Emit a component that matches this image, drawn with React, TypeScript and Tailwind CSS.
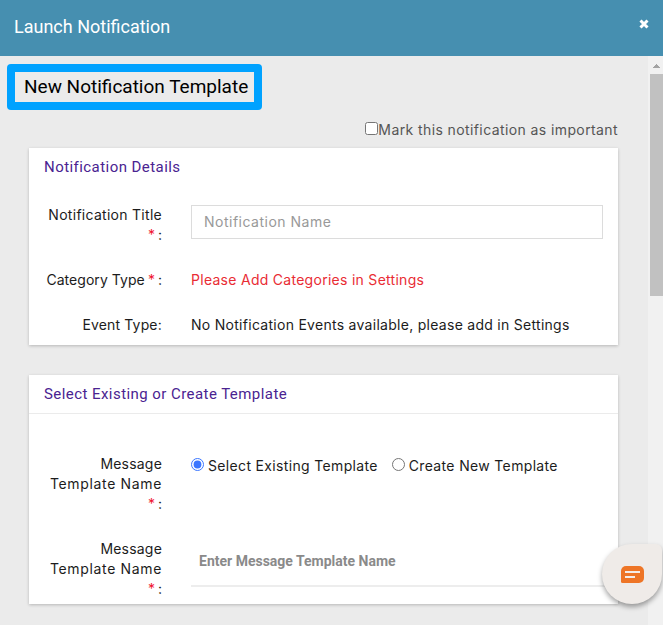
import type { ReactNode } from "react";

interface FieldLabelProps {
  children: ReactNode;
  required?: boolean;
}

function FieldLabel({ children, required = false }: FieldLabelProps) {
  return (
    <label className="w-[118px] shrink-0 text-right">
      {children}
      {required ? (
        <>
          {" "}
          {/* keeps the asterisk and the colon on one line */}
          <span className="-ml-px whitespace-nowrap tracking-normal">
            <span className="mr-[-1px] text-[#f0142f]">*</span> :
          </span>
        </>
      ) : (
        ":"
      )}
    </label>
  );
}

interface PanelProps {
  title: string;
  divided?: boolean;
  children: ReactNode;
}

function Panel({ title, divided = false, children }: PanelProps) {
  return (
    <section className="bg-white shadow-[0_1px_3px_rgba(0,0,0,0.22)]">
      <h2
        className={`h-[39px] border-b px-[15px] font-[Roboto] text-[15px] leading-[38px] font-normal tracking-[0.44px] text-[#4a2391] ${
          divided ? "border-[#ebebeb]" : "border-transparent"
        }`}
      >
        {title}
      </h2>
      {children}
    </section>
  );
}

function TemplateNameLabel() {
  return (
    <FieldLabel required>
      <span className="tracking-[0.2px]">Message</span>{" "}
      <span className="tracking-[0.65px]">Template Name</span>
    </FieldLabel>
  );
}

function Scrollbar() {
  return (
    <div className="flex w-[15px] shrink-0 flex-col bg-[#f1f1f1] pl-[2px]">
      <svg width="13" height="17" viewBox="0 0 13 17" className="mt-px" shapeRendering="crispEdges">
        <path d="M3 11h7v-1H9V9H8V8H7V7H6v1H5v1H4v1H3z" fill="#a3a3a3" />
      </svg>
      <div className="h-[222px] bg-[#c1c1c1]" />
    </div>
  );
}

function ChatButton() {
  return (
    <button
      aria-label="Open chat"
      className="absolute top-[544px] left-[602px] flex h-[60px] w-[60px] items-center justify-center rounded-[30px] rounded-tr-[6px] bg-[#efebe8] shadow-[0_3px_5px_rgba(0,0,0,0.35)]"
    >
      <svg width="23" height="17" viewBox="0 0 23 17">
        <path d="M5 0h13a5 5 0 0 1 5 5v7a5 5 0 0 1-5 5H1.5A1.5 1.5 0 0 1 0 15.500V5a5 5 0 0 1 5-5z" fill="#ee7526" />
        <path d="M4 6h15M4 11h10" stroke="#f4ede8" strokeWidth="2" />
      </svg>
    </button>
  );
}

export default function App() {
  return (
    <div className="relative flex h-[625px] w-[663px] flex-col overflow-hidden bg-[#ebebeb] font-[Inter,sans-serif] text-[14px] leading-5 tracking-[0.28px] text-[#1c1c1c]">
      <header className="flex h-14 shrink-0 items-center justify-between bg-[#468fb0] pr-[14px] pl-[14px] text-white">
        <h1 className="-mt-[3px] font-[Roboto] text-[18px] tracking-normal">Launch Notification</h1>
        <button aria-label="Close" className="-mt-2">
          <svg width="10" height="10" viewBox="0 0 10 10">
            <path d="M1.500 1.500l7 7M8.500 1.500l-7 7" stroke="white" strokeWidth="3" />
          </svg>
        </button>
      </header>

      <div className="flex min-h-0 flex-1">
        <main className="w-[648px] pt-2">
          <div className="ml-[7px] flex h-[46px] w-[255px] items-center rounded-[4px] bg-[#00a2ff] p-2">
            <div className="h-[30px] w-full bg-[#ebebeb] pl-[9px] font-[Roboto] text-[19px] leading-[29px] tracking-normal whitespace-nowrap text-black">
              New Notification Template
            </div>
          </div>

          <div className="mr-[30px] ml-[29px]">
            <label className="flex h-[38px] items-center justify-end pt-[3px] text-[#555]">
              <input type="checkbox" className="mb-1 h-[13px] w-[13px]" />
              <span className="mb-0.5 tracking-[0.4px]">Mark this notification as important</span>
            </label>

            <Panel title="Notification Details">
              <div className="flex flex-col gap-[25px] px-[15px] pt-[18px] pb-[10px]">
                <div className="flex gap-[29px]">
                  <FieldLabel required>
                    <span className="block whitespace-nowrap">Notification Title</span>
                  </FieldLabel>
                  <input
                    type="text"
                    placeholder="Notification Name"
                    className="h-[34px] min-w-0 flex-1 border border-[#dcdcdc] px-3 pb-px tracking-[0.5px] placeholder:text-[#999]"
                  />
                </div>
                <div className="flex gap-[29px]">
                  <FieldLabel required>
                    <span className="tracking-[0.05px]">Category Type</span>
                  </FieldLabel>
                  <p className="text-[#e92c34]">Please Add Categories in Settings</p>
                </div>
                <div className="flex gap-[29px]">
                  <FieldLabel>
                    <span className="tracking-[0.15px]">Event Type</span>
                  </FieldLabel>
                  <p>No Notification Events available, please add in Settings</p>
                </div>
              </div>
            </Panel>

            <div className="mt-[30px]">
              <Panel title="Select Existing or Create Template" divided>
                <div className="flex flex-col gap-[25px] pt-10 pb-[5px] pl-[15px]">
                  <div className="flex gap-[29px]">
                    <TemplateNameLabel />
                    <div className="flex h-5 items-center tracking-[0.34px]">
                      <input type="radio" name="mode" defaultChecked className="h-[13px] w-[13px] accent-[#3b76ff]" />
                      <span className="mt-1 ml-1">Select Existing Template</span>
                      <input type="radio" name="mode" className="ml-[14px] h-[13px] w-[13px]" />
                      <span className="mt-1 ml-1">Create New Template</span>
                    </div>
                  </div>
                  <div className="flex gap-[29px]">
                    <TemplateNameLabel />
                    <input
                      type="text"
                      placeholder="Enter Message Template Name"
                      className="h-12 min-w-0 flex-1 border-b-2 border-[#ededed] px-2 pb-0.5 font-[Roboto] font-bold tracking-normal placeholder:text-[#8a8a8a]"
                    />
                  </div>
                </div>
              </Panel>
            </div>
          </div>
        </main>
        <Scrollbar />
      </div>

      <ChatButton />
    </div>
  );
}
